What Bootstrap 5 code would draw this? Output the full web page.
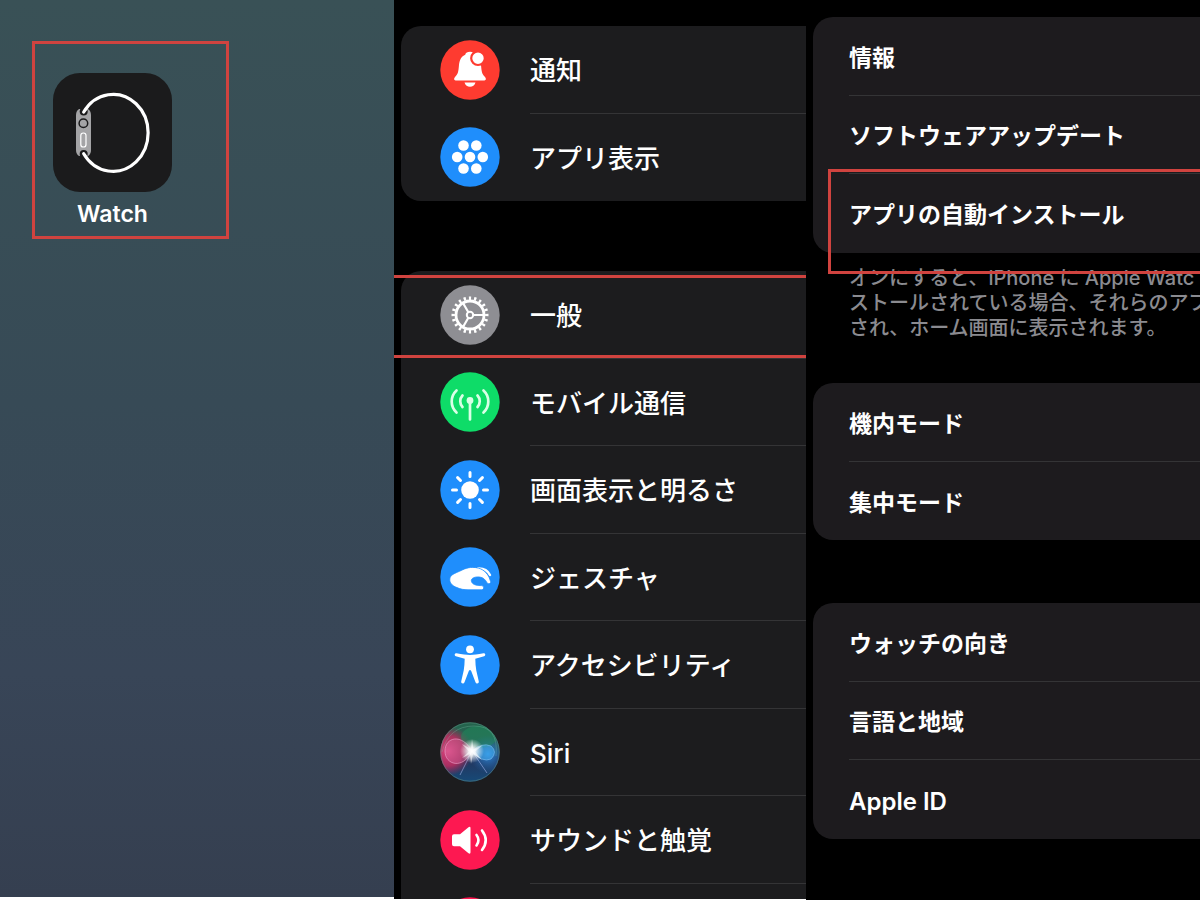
<!DOCTYPE html>
<html lang="ja">
<head>
<meta charset="utf-8">
<meta name="viewport" content="width=device-width, initial-scale=1">
<title>Watch</title>
<link href="https://cdn.jsdelivr.net/npm/bootstrap@5.3.0/dist/css/bootstrap.min.css" rel="stylesheet">
<style>
:root { --mark: #d0433f; --line: #343436; }
body { font-family: Inter, "Noto Sans CJK JP", sans-serif; font-weight: 500; background: #fff; }
.panels { display: grid; grid-template-columns: 394fr 412fr 394fr; height: 100vh; overflow: hidden; }
.panels > section { min-width: 0; overflow: hidden; }
.home { background: linear-gradient(#395156, #374a56 45%, #384557 75%, #353f50); margin-bottom: 3px; padding: 41px 32px; }
.watch-app { width: 197px; border: 3px solid var(--mark); padding: 29px 18px 8px; }
.watch-app .tile { width: 119px; }
.app-name { font-size: 23px; line-height: 28px; font-weight: 600; }
.menu { background: #000; margin-bottom: 1px; padding: 26px 0 0 7px; }
.detail { background: #000; padding: 17px 0 0 7px; }
.group { display: grid; grid-auto-rows: 1fr; background: #1c1c1e; border-radius: 20px 0 0 20px; }
.detail .group { background: #1d1b1e; }
.group a { color: #fff; text-decoration: none; white-space: nowrap; }
.group a > span { border-bottom: 1px solid var(--line); padding-top: 3px; }
.group a:last-child > span { border-bottom: 0; }
.menu .group { height: 175px; margin-bottom: 70px; }
.menu .group.long { height: 700px; margin-bottom: 0; border-bottom-left-radius: 0; }
.menu .group a { padding-left: 39px; gap: 30px; font-size: 26px; }
.menu svg { width: 60px; height: 60px; flex: none; }
.detail .group a { padding-left: 36px; font-size: 23px; font-weight: 600; }
.detail .group a > span { padding-top: 4px; }
.detail .group a .latin { font-size: 24px; }
.detail .three { height: 236px; }
.detail .two { height: 157px; margin: 42px 0 63px; }
.note { color: #8b8b90; font-size: 20px; line-height: 25px; padding-left: 36px; margin-top: 13px; }
.marked { position: relative; }
.marked::after { content: ""; position: absolute; border: 3px solid var(--mark); pointer-events: none; }
.menu .marked::after { inset: 4px 0 1px -7px; border-width: 3px 0; }
.detail .marked::after { inset: -5px -3px -21px 15px; border-right: 0; }
</style>
</head>
<body>
<main class="panels">
  <section class="home" aria-label="ホーム画面">
    <a href="#" class="watch-app d-flex flex-column align-items-start text-white text-decoration-none">
      <svg class="tile" viewBox="0 0 119 119" aria-hidden="true">
        <rect width="119" height="119" rx="27" fill="#1b1b1c"/>
        <path d="M26 36h9q3 2 3 6v35q0 4-3 6h-9q-3-2-3-6V42q0-4 3-6z" fill="#a4a4a6"/>
        <circle cx="30.7" cy="38.5" r="4" fill="#1b1b1c"/><circle cx="30.7" cy="81" r="4" fill="#1b1b1c"/>
        <path d="M30.7 39A35 38.5 0 1 1 30.7 80.7" fill="none" stroke="#fff" stroke-width="3.2" stroke-linecap="round"/>
        <circle cx="30.4" cy="50.3" r="4.3" fill="#a4a4a6" stroke="#1b1b1c" stroke-width="1.5"/>
        <rect x="27.8" y="60" width="5.2" height="14" rx="2.6" fill="#a4a4a6" stroke="#fff" stroke-width="1.2"/>
      </svg>
      <span class="app-name tile text-center mt-2">Watch</span>
    </a>
  </section>

  <section class="menu" aria-label="マイウォッチ">
    <nav class="group">
      <a href="#" class="d-flex align-items-center">
        <svg viewBox="0 0 60 60" aria-hidden="true"><circle cx="30" cy="30" r="29.7" fill="#fe3b30"/><g fill="#fff"><path d="M15.6 40.5c-1.800 0-2-2-.4-3.700 2.700-2.600 3.200-4.800 3.700-10.800.5-6.500 2.600-9.800 6.300-11.300.6-2 2.200-2.900 4.800-2.900s4.200.9 4.800 2.900c3.700 1.500 5.800 4.800 6.300 11.300.5 6 1 8.200 3.700 10.800 1.600 1.700 1.400 3.700-.4 3.700zM24.500 42.500h11q-1.500 4.300-5.500 4.300t-5.500-4.300z"/><circle cx="38" cy="18.200" r="6.800" stroke="#fe3b30" stroke-width="2.200"/></g></svg>
        <span class="flex-fill align-self-stretch d-flex align-items-center">通知</span></a>
      <a href="#" class="d-flex align-items-center">
        <svg viewBox="0 0 60 60" aria-hidden="true"><circle cx="30" cy="30" r="29.700" fill="#1f8efc"/><g fill="#fff"><circle cx="23.500" cy="18.500" r="5.300"/><circle cx="36.300" cy="18.500" r="5.300"/><circle cx="17.200" cy="30" r="5.300"/><circle cx="30" cy="30" r="5.300"/><circle cx="42.800" cy="30" r="5.300"/><circle cx="23.500" cy="41.500" r="5.300"/><circle cx="36.300" cy="41.500" r="5.300"/></g></svg>
        <span class="flex-fill align-self-stretch d-flex align-items-center">アプリ表示</span></a>
    </nav>
    <nav class="group long">
      <a href="#" class="marked d-flex align-items-center">
        <svg viewBox="0 0 60 60" aria-hidden="true"><circle cx="30" cy="30" r="29.700" fill="#8e8e93"/><g fill="none" stroke="#fff"><circle cx="30" cy="30" r="14" stroke-width="2.800"/><circle cx="30" cy="30" r="16.800" stroke-width="3.400" pathLength="80" stroke-dasharray="1.700 2.300" stroke-dashoffset=".85"/><circle cx="30" cy="30" r="3.200" stroke-width="2"/><path d="M33.500 30H44M28.200 27L23 18M28.200 33L23 42" stroke-width="2.200"/></g></svg>
        <span class="flex-fill align-self-stretch d-flex align-items-center">一般</span></a>
      <a href="#" class="d-flex align-items-center">
        <svg viewBox="0 0 60 60" aria-hidden="true"><circle cx="30" cy="30" r="29.700" fill="#0edc68"/><g fill="none" stroke="#d9ffe6" stroke-width="2.700" stroke-linecap="round"><path d="M16.500 18.500A15 15 0 0 0 16.500 40.500M43.500 18.500A15 15 0 0 1 43.500 40.500M22.500 23.500A8.500 8.500 0 0 0 22.500 35M37.500 23.500A8.500 8.500 0 0 1 37.500 35M30 29V47.500"/></g><circle cx="30" cy="28.500" r="3.400" fill="#d9ffe6"/></svg>
        <span class="flex-fill align-self-stretch d-flex align-items-center">モバイル通信</span></a>
      <a href="#" class="d-flex align-items-center">
        <svg viewBox="0 0 60 60" aria-hidden="true"><circle cx="30" cy="30" r="29.700" fill="#1f8efc"/><circle cx="30" cy="30" r="8.800" fill="#fff"/><path d="M30 12.500v4M30 43.500v4M12.500 30h4M43.500 30h4M17.600 17.600l2.900 2.900M39.500 39.500l2.900 2.900M17.600 42.400l2.900-2.900M39.500 20.500l2.900-2.900" stroke="#fff" stroke-width="3" stroke-linecap="round"/></svg>
        <span class="flex-fill align-self-stretch d-flex align-items-center">画面表示と明るさ</span></a>
      <a href="#" class="d-flex align-items-center">
        <svg viewBox="0 0 60 60" aria-hidden="true"><circle cx="30" cy="30" r="29.700" fill="#1f8efc"/><path d="M38 21.500q8.500-.5 12 6.500" fill="none" stroke="#fff" stroke-width="2.400" stroke-linecap="round"/><path d="M9.800 32c.3-3.500 3.500-5 8-7 5-2 8-4.600 15-4.600 8 0 13 3.600 16.200 9.600l1.600 4.500c.5 2.200-2.300 3-3.600 1.200-2-3.700-4-5.200-7.500-5.700-4.500-.4-8 1-8.200 3.500.2 3 3 4.700 7.500 5l2.700.1c3 .4 2.700 4.200 0 4.200H28c-4 0-7.500-.6-11-2.200-5-1.800-7.500-4.800-7.200-8.600z" fill="#fff" stroke="#1f8efc" stroke-width=".8"/></svg>
        <span class="flex-fill align-self-stretch d-flex align-items-center">ジェスチャ</span></a>
      <a href="#" class="d-flex align-items-center">
        <svg viewBox="0 0 60 60" aria-hidden="true"><circle cx="30" cy="30" r="29.700" fill="#1f8efc"/><g fill="#fff"><circle cx="30" cy="14.300" r="3.900"/><path d="M16.500 18.300q8.500 1.700 13.500 1.700t13.500-1.700c2.100-.2 2.400 2.400.6 2.900L35.300 23.700q.1 7 1 11.800l2.500 11c.3 2.200-2.500 2.700-3.300.7L31.200 36q-1.200-2-2.400 0l-4.300 11.200c-.8 2-3.600 1.500-3.300-.7l2.500-11q.9-4.800 1-11.800l-8.800-2.500c-1.800-.5-1.500-3.100.6-2.900z"/></g></svg>
        <span class="flex-fill align-self-stretch d-flex align-items-center">アクセシビリティ</span></a>
      <a href="#" class="d-flex align-items-center">
        <svg viewBox="0 0 60 60" aria-hidden="true">
          <defs>
            <clipPath id="orb"><circle cx="30" cy="30" r="29.700"/></clipPath>
            <radialGradient id="glow"><stop offset="0" stop-color="#fff"/><stop offset=".3" stop-color="#fff" stop-opacity=".85"/><stop offset="1" stop-color="#fff" stop-opacity="0"/></radialGradient>
            <radialGradient id="pink"><stop offset="0" stop-color="#d8457f"/><stop offset=".6" stop-color="#c02b60" stop-opacity=".85"/><stop offset="1" stop-color="#a02850" stop-opacity="0"/></radialGradient>
            <radialGradient id="blue"><stop offset="0" stop-color="#2c8de0"/><stop offset="1" stop-color="#2268b0" stop-opacity="0"/></radialGradient>
            <linearGradient id="base" x2="0" y2="1"><stop offset="0" stop-color="#23654b"/><stop offset=".4" stop-color="#2d5c58"/><stop offset=".6" stop-color="#25345c"/><stop offset="1" stop-color="#164a78"/></linearGradient>
          </defs>
          <g clip-path="url(#orb)">
            <rect width="60" height="60" fill="url(#base)"/>
            <circle cx="8" cy="29" r="25" fill="url(#pink)"/><circle cx="48" cy="32" r="19" fill="url(#blue)"/>
            <ellipse cx="39" cy="15" rx="18" ry="11" fill="#208c5c" opacity=".5"/>
            <path d="M32 29C22 11 5 15 5 29s18 19 27 0z" fill="#e98bc0" fill-opacity=".25" stroke="#f2a6cf" stroke-opacity=".6"/>
            <path d="M32 29q10-9 19-5 7 6 0 13-9 4-19-8z" fill="#45adf0" fill-opacity=".55" stroke="#8fd0ff" stroke-opacity=".5"/>
            <path d="M32 29L20 53M32 29L47 51" stroke="#b9c5ff" stroke-opacity=".5"/>
            <path d="M2 30Q9 4 34 4T56 34" fill="none" stroke="#79bfa8" stroke-opacity=".4" stroke-width=".8"/>
            <circle cx="32" cy="29" r="12" fill="url(#glow)"/>
            <path d="M32 17l1.500 10.500L43 23l-8 6.500L42 38l-9-6-2 10-1-10-8 4 7-6.500L22 22l9 5z" fill="#fff" opacity=".55"/>
          </g>
          <circle cx="30" cy="30" r="29.200" fill="none" stroke="#5e8d86" stroke-opacity=".5"/>
        </svg>
        <span class="flex-fill align-self-stretch d-flex align-items-center">Siri</span></a>
      <a href="#" class="d-flex align-items-center">
        <svg viewBox="0 0 60 60" aria-hidden="true"><circle cx="30" cy="30" r="29.700" fill="#fd1851"/><path d="M14 24.200h6l8.500-7q2-1.300 2 1v24q0 2.300-2 1l-8.500-7h-6q-2 0-2-2v-8q0-2 2-2z" fill="#fff"/><path d="M36.500 25q4 5.200 0 10.500M42 20.500q7.500 9.700 0 19.500" fill="none" stroke="#fff" stroke-width="2.600" stroke-linecap="round"/></svg>
        <span class="flex-fill align-self-stretch d-flex align-items-center">サウンドと触覚</span></a>
      <a href="#" class="d-flex align-items-center" aria-label="次の項目">
        <svg viewBox="0 0 60 60" aria-hidden="true"><circle cx="30" cy="30" r="29.700" fill="#fd1851"/></svg>
      </a>
    </nav>
  </section>

  <section class="detail" aria-label="一般">
    <nav class="group three">
      <a href="#" class="d-flex"><span class="flex-fill d-flex align-items-center">情報</span></a>
      <a href="#" class="d-flex"><span class="flex-fill d-flex align-items-center">ソフトウェアアップデート</span></a>
      <a href="#" class="d-flex marked"><span class="flex-fill d-flex align-items-center">アプリの自動インストール</span></a>
    </nav>
    <p class="note text-nowrap mb-0">オンにすると、iPhone に Apple Watc<br>ストールされている場合、それらのアプ<br>され、ホーム画面に表示されます。</p>
    <nav class="group two">
      <a href="#" class="d-flex"><span class="flex-fill d-flex align-items-center">機内モード</span></a>
      <a href="#" class="d-flex"><span class="flex-fill d-flex align-items-center">集中モード</span></a>
    </nav>
    <nav class="group three">
      <a href="#" class="d-flex"><span class="flex-fill d-flex align-items-center">ウォッチの向き</span></a>
      <a href="#" class="d-flex"><span class="flex-fill d-flex align-items-center">言語と地域</span></a>
      <a href="#" class="d-flex"><span class="latin flex-fill d-flex align-items-center">Apple ID</span></a>
    </nav>
  </section>
</main>
<script src="https://cdn.jsdelivr.net/npm/bootstrap@5.3.0/dist/js/bootstrap.bundle.min.js"></script>
</body>
</html>
